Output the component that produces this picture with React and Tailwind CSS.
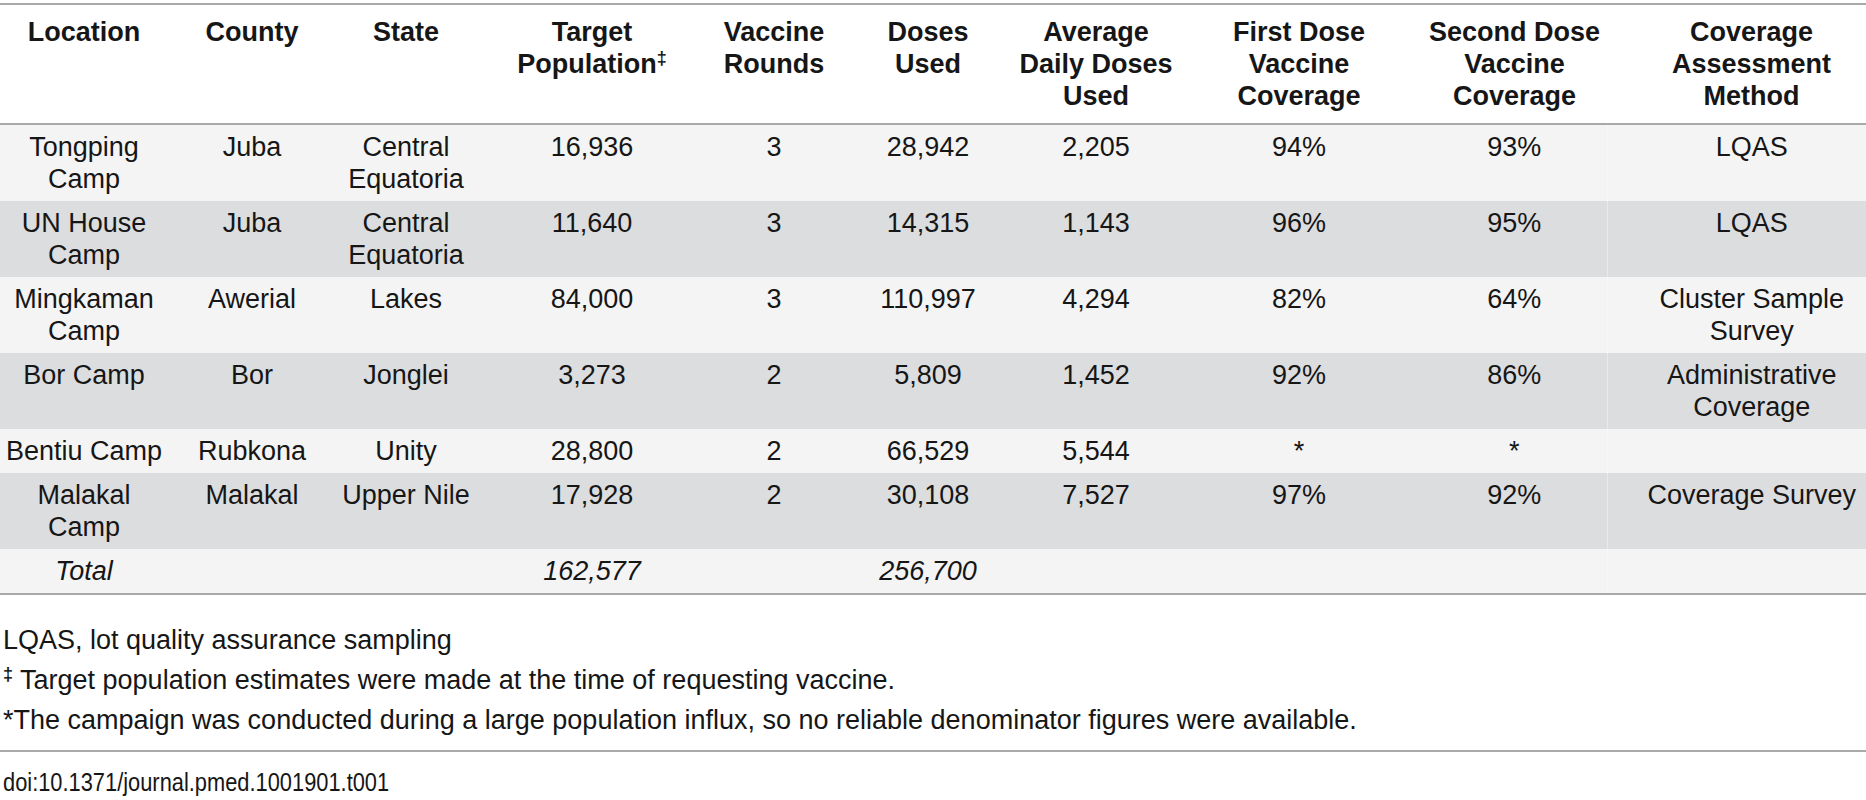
const columns = [
  { w: 'w-[168px]', head: ['Location'] },
  { w: 'w-[168px]', head: ['County'] },
  { w: 'w-[140px]', head: ['State'] },
  { w: 'w-[232px]', head: ['Target', 'Population'], sup: true },
  { w: 'w-[132px]', head: ['Vaccine', 'Rounds'] },
  { w: 'w-[176px]', head: ['Doses', 'Used'] },
  { w: 'w-[160px]', head: ['Average', 'Daily Doses', 'Used'] },
  { w: 'w-[246px]', head: ['First Dose', 'Vaccine', 'Coverage'] },
  { w: 'w-[185px]', head: ['Second Dose', 'Vaccine', 'Coverage'] },
  { w: 'w-[259px]', head: ['Coverage', 'Assessment', 'Method'] },
];

const rows = [
  [['Tongping', 'Camp'], ['Juba'], ['Central', 'Equatoria'], ['16,936'], ['3'], ['28,942'], ['2,205'], ['94%'], ['93%'], ['LQAS']],
  [['UN House', 'Camp'], ['Juba'], ['Central', 'Equatoria'], ['11,640'], ['3'], ['14,315'], ['1,143'], ['96%'], ['95%'], ['LQAS']],
  [['Mingkaman', 'Camp'], ['Awerial'], ['Lakes'], ['84,000'], ['3'], ['110,997'], ['4,294'], ['82%'], ['64%'], ['Cluster Sample', 'Survey']],
  [['Bor Camp'], ['Bor'], ['Jonglei'], ['3,273'], ['2'], ['5,809'], ['1,452'], ['92%'], ['86%'], ['Administrative', 'Coverage']],
  [['Bentiu Camp'], ['Rubkona'], ['Unity'], ['28,800'], ['2'], ['66,529'], ['5,544'], ['*'], ['*'], ['']],
  [['Malakal', 'Camp'], ['Malakal'], ['Upper Nile'], ['17,928'], ['2'], ['30,108'], ['7,527'], ['97%'], ['92%'], ['Coverage Survey']],
];

const total = ['Total', '', '', '162,577', '', '256,700', '', '', '', ''];

const Lines = ({ lines }) =>
  lines.map((l, i) => (
    <span key={i} className="block whitespace-nowrap">
      {l || '\u00a0'}
    </span>
  ));

export default function App() {
  return (
    <div className="w-[1866px] bg-white pt-[3px] font-['Liberation_Sans',Arial,Helvetica,sans-serif] text-[#161616]">
      <table className="w-full table-fixed border-collapse text-[27px] leading-[32px]">
        <colgroup>
          {columns.map((c, i) => (
            <col key={i} className={c.w} />
          ))}
        </colgroup>
        <thead>
          <tr className="border-y-2 border-[#a9a9a9]">
            {columns.map((c, i) => (
              <th
                key={i}
                className={`px-0 pt-[11px] pb-[11px] align-top text-center font-bold ${i === 9 ? 'pl-[30px]' : ''}`}
              >
                {c.head.map((h, j) => (
                  <span key={j} className="block whitespace-nowrap">
                    {h}
                    {c.sup && j === 1 && <sup className="text-[18px] leading-none">‡</sup>}
                  </span>
                ))}
              </th>
            ))}
          </tr>
        </thead>
        <tbody>
          {rows.map((r, ri) => (
            <tr key={ri} className={ri % 2 === 0 ? 'bg-[#f4f4f4]' : 'bg-[#dcdddf]'}>
              {r.map((cell, ci) => (
                <td
                  key={ci}
                  className={`px-0 py-[6px] align-top text-center ${
                    ci === 9 ? 'border-l border-white/40 pl-[30px]' : ''
                  }`}
                >
                  <Lines lines={cell} />
                </td>
              ))}
            </tr>
          ))}
          <tr className="border-b-2 border-[#a9a9a9] bg-[#f4f4f4]">
            {total.map((t, i) => (
              <td
                key={i}
                className={`px-0 py-[6px] align-top text-center italic ${
                  i === 9 ? 'border-l border-white/40 pl-[30px]' : ''
                }`}
              >
                {t || '\u00a0'}
              </td>
            ))}
          </tr>
        </tbody>
      </table>

      <div className="mt-[25px] pl-[3px] text-[27px] leading-[40px]">
        <p>LQAS, lot quality assurance sampling</p>
        <p>
          <sup className="text-[18px] font-bold leading-none">‡</sup> Target population estimates were made at the time
          of requesting vaccine.
        </p>
        <p>
          *The campaign was conducted during a large population influx, so no reliable denominator figures were
          available.
        </p>
      </div>

      <div className="mt-[10px] border-t-2 border-[#a9a9a9]" />

      <p className="mt-[14px] pl-[3px] text-[26px] leading-[32px]">
        <span className="inline-block origin-left scale-x-[0.84]">doi:10.1371/journal.pmed.1001901.t001</span>
      </p>
    </div>
  );
}
